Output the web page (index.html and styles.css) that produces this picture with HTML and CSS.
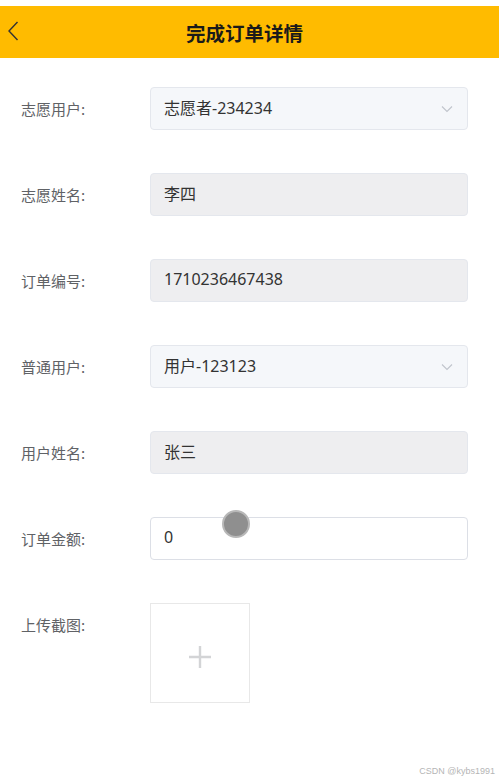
FILE: index.html
```html
<!DOCTYPE html>
<html lang="zh">
<head>
<meta charset="utf-8">
<title>完成订单详情</title>
<link rel="stylesheet" href="styles.css">
</head>
<body>
<div class="page">
  <header class="bar">
    <span class="back">
      <svg width="12" height="20" viewBox="0 0 12 20"><path d="M10.5 1 L2 10 L10.5 19" fill="none" stroke="#333" stroke-width="1.4"/></svg>
    </span>
    <h1 class="title">完成订单详情</h1>
  </header>
  <form class="form">
    <div class="row">
      <label class="label">志愿用户:</label>
      <div class="field select"><span>志愿者-234234</span>
        <svg class="chev" width="12" height="8" viewBox="0 0 12 8"><path d="M1 1.5 L6 6.5 L11 1.5" fill="none" stroke="#c0c4cc" stroke-width="1.1"/></svg>
      </div>
    </div>
    <div class="row">
      <label class="label">志愿姓名:</label>
      <div class="field disabled"><span>李四</span></div>
    </div>
    <div class="row">
      <label class="label">订单编号:</label>
      <div class="field disabled"><span>1710236467438</span></div>
    </div>
    <div class="row">
      <label class="label">普通用户:</label>
      <div class="field select"><span>用户-123123</span>
        <svg class="chev" width="12" height="8" viewBox="0 0 12 8"><path d="M1 1.5 L6 6.5 L11 1.5" fill="none" stroke="#c0c4cc" stroke-width="1.1"/></svg>
      </div>
    </div>
    <div class="row">
      <label class="label">用户姓名:</label>
      <div class="field disabled"><span>张三</span></div>
    </div>
    <div class="row">
      <label class="label">订单金额:</label>
      <div class="field input"><span>0</span><span class="touch"></span></div>
    </div>
    <div class="row">
      <label class="label">上传截图:</label>
      <div class="upload">
        <svg class="plus" width="24" height="24" viewBox="0 0 24 24"><path d="M12 1 V23 M1 12 H23" stroke="#d3d4d6" stroke-width="2.4"/></svg>
      </div>
    </div>
  </form>
  <div class="mark">CSDN @kybs1991</div>
</div>
</body>
</html>
```
FILE: styles.css
```css
* { box-sizing: border-box; }
html, body { margin: 0; padding: 0; background: #fff; }
body {
  font-family: "Noto Sans", "Noto Sans CJK SC", sans-serif;
  width: 499px;
  height: 782px;
  overflow: hidden;
}
.page {
  position: relative;
  height: 782px;
  padding-top: 6px;
}
.bar {
  position: relative;
  height: 52px;
  background: #ffbb00;
  display: flex;
  align-items: center;
  justify-content: center;
}
.back {
  position: absolute;
  left: 7px;
  top: 15px;
  display: flex;
}
.title {
  margin: 0 10px 0 0;
  font-size: 19.5px;
  font-weight: 700;
  color: #1a1a1a;
  font-family: "Noto Sans CJK SC", sans-serif;
}
.form {
  display: flex;
  flex-direction: column;
  gap: 43px;
  padding: 29px 31px 0 21px;
}
.row {
  display: flex;
  align-items: flex-start;
}
.label {
  width: 129px;
  flex: none;
  line-height: 43px;
  font-size: 15px;
  color: #606266;
  font-family: "Noto Sans CJK SC", sans-serif;
}
.field {
  position: relative;
  flex: 1;
  height: 43px;
  border-radius: 4px;
  display: flex;
  align-items: center;
  padding: 0 13px 3px;
  font-size: 16px;
  color: #333;
}
.select {
  background: #f5f7fa;
  border: 1px solid #e4e7ed;
  justify-content: space-between;
}
.chev { margin-right: 1px; margin-top: 3px; }
.disabled {
  background: #eeeef0;
  border: 1px solid #e4e7ed;
}
.input {
  background: #fff;
  border: 1px solid #dcdfe6;
}
.touch {
  position: absolute;
  left: 71px;
  top: -8px;
  width: 28px;
  height: 28px;
  border-radius: 50%;
  background: #8f8f8f;
  border: 2px solid #b8b8b8;
}
.upload {
  width: 100px;
  height: 100px;
  border: 1px solid #e8e8e8;
  display: flex;
  align-items: center;
  justify-content: center;
}
.plus { margin-top: 8px; }
.mark {
  position: absolute;
  right: 4px;
  bottom: 6px;
  font-size: 9px;
  color: #b5b5b5;
  font-family: "Liberation Sans", sans-serif;
}
```
